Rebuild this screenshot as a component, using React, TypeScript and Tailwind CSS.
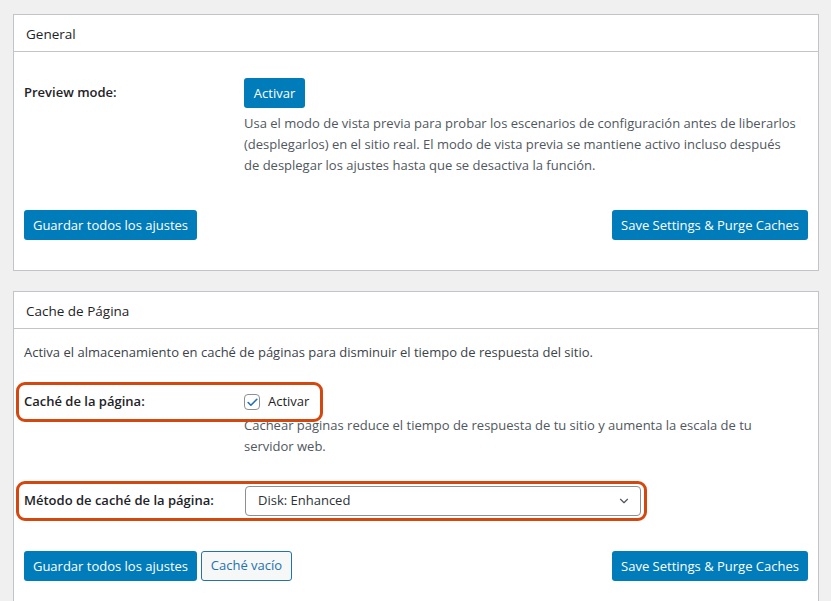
import { Check, ChevronDown } from "lucide-react";

const font = { fontFamily: '"Open Sans", "Noto Sans", sans-serif' };

function PrimaryButton({ label, width }: { label: string; width: string }) {
  return (
    <button
      type="button"
      className={`h-[30px] ${width} shrink-0 rounded-[3px] bg-[#007cba] text-center text-[13px] leading-[30px] text-white`}
    >
      {label}
    </button>
  );
}

function Highlight({ className }: { className: string }) {
  return (
    <div
      className={`pointer-events-none absolute rounded-[9px] border-[3px] border-[#d4480f] ${className}`}
    />
  );
}

function Card({
  title,
  children,
}: {
  title: string;
  children: React.ReactNode;
}) {
  return (
    <section className="border border-[#c3c4c7] bg-white">
      <header className="flex h-[37px] items-center border-b border-[#c3c4c7] px-3 pt-[2px] text-[13.5px] text-[#1d2327]">
        {title}
      </header>
      <div className="px-[10px]">{children}</div>
    </section>
  );
}

export default function App() {
  return (
    <div
      className="min-h-screen overflow-hidden bg-[#f0f0f1] px-[13px] pt-[14px]"
      style={font}
    >
      <div className="w-[806px]">
        <Card title="General">
          <div className="flex pt-[26px]">
            <div className="flex h-[30px] w-[220px] shrink-0 items-center text-[13px] font-semibold text-[#1d2327]">
              Preview mode:
            </div>
            <div>
              <PrimaryButton label="Activar" width="w-[61px]" />
              <p className="mt-[5px] text-[13px] leading-[21px] whitespace-nowrap text-[#50575e]">
                Usa el modo de vista previa para probar los escenarios de configuración antes de liberarlos
                <br />
                (desplegarlos) en el sitio real. El modo de vista previa se mantiene activo incluso después
                <br />
                de desplegar los ajustes hasta que se desactiva la función.
              </p>
            </div>
          </div>
          <div className="mt-[34px] flex justify-between pb-[30px]">
            <PrimaryButton label="Guardar todos los ajustes" width="w-[173px]" />
            <PrimaryButton label="Save Settings & Purge Caches" width="w-[196px]" />
          </div>
        </Card>

        <div className="mt-[20px]">
          <Card title="Cache de Página">
            <p className="mt-[13px] text-[13px] leading-[21px] text-[#3c434a]">
              Activa el almacenamiento en caché de páginas para disminuir el tiempo de respuesta del sitio.
            </p>

            <div className="relative mt-[29px] flex">
              <Highlight className="-left-[8px] -top-[10px] h-[40px] w-[307px]" />
              <div className="flex h-[20px] w-[220px] shrink-0 items-center text-[13px] font-semibold text-[#1d2327]">
                Caché de la página:
              </div>
              <div>
                <label className="flex h-[20px] items-center gap-2 text-[13px] text-[#1d2327]">
                  <span className="flex h-4 w-4 items-center justify-center rounded-[4px] border border-[#8c8f94] bg-white">
                    <Check size={13} strokeWidth={3} className="text-[#2271b1]" />
                  </span>
                  Activar
                </label>
                <p className="mt-[3px] text-[13px] leading-[21px] whitespace-nowrap text-[#50575e]">
                  Cachear páginas reduce el tiempo de respuesta de tu sitio y aumenta la escala de tu
                  <br />
                  servidor web.
                </p>
              </div>
            </div>

            <div className="relative mt-[29px] flex">
              <Highlight className="-left-[8px] -top-[5px] h-[40px] w-[631px]" />
              <div className="flex h-[30px] w-[221px] shrink-0 items-center text-[13px] font-semibold text-[#1d2327]">
                Método de caché de la página:
              </div>
              <div className="flex h-[30px] w-[396px] items-center justify-between rounded-[4px] border border-[#8c8f94] bg-white pr-[9px] pl-[12px] text-[13px] text-[#2c3338]">
                Disk: Enhanced
                <ChevronDown size={14} strokeWidth={2} className="text-[#50575e]" />
              </div>
            </div>

            <div className="mt-[35px] flex items-center justify-between pb-[29px]">
              <div className="flex gap-[4px]">
                <PrimaryButton label="Guardar todos los ajustes" width="w-[173px]" />
                <button
                  type="button"
                  className="h-[30px] w-[91px] rounded-[3px] border border-[#2271b1] bg-[#f6f7f7] text-center text-[13px] text-[#2271b1]"
                >
                  Caché vacío
                </button>
              </div>
              <PrimaryButton label="Save Settings & Purge Caches" width="w-[196px]" />
            </div>
          </Card>
        </div>
      </div>
    </div>
  );
}
